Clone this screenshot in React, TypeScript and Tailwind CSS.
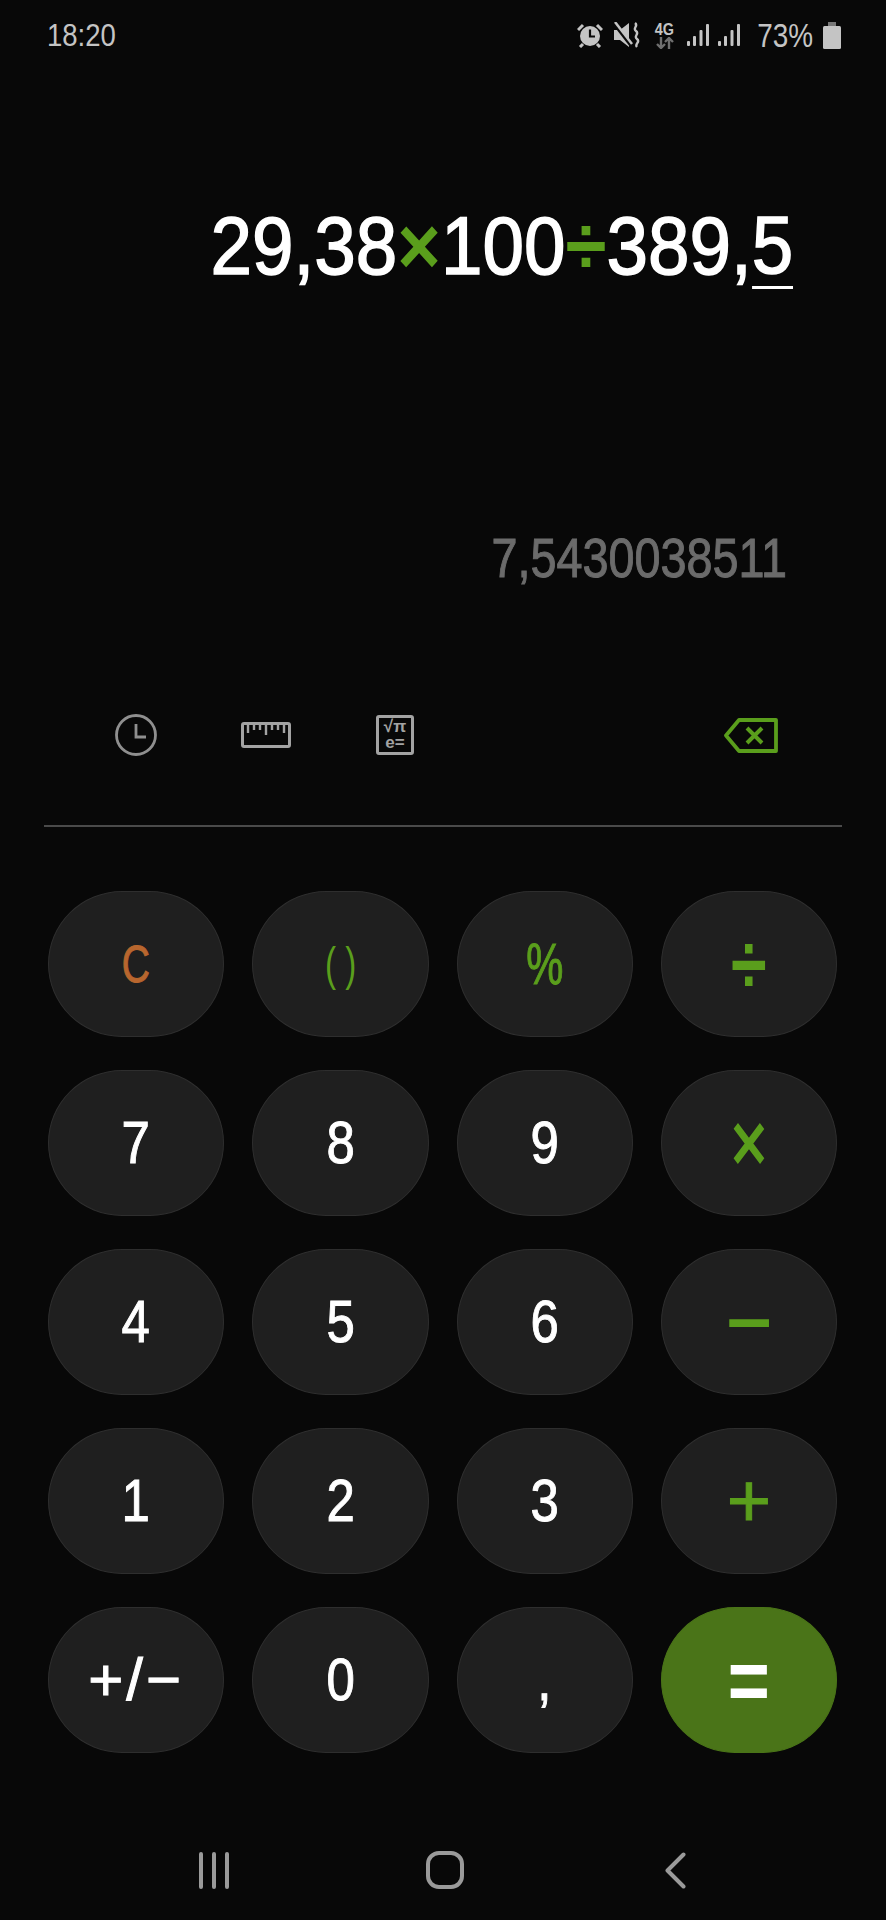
const sans = "font-['Liberation_Sans',sans-serif]";

const keys = [
  { label: "C", tone: "text-[#b8662e] text-[52px] scale-x-[.75] [-webkit-text-stroke:1px_#b8662e]" },
  { label: "( )", tone: "text-[#5a9e1c] text-[46px] scale-x-[.72]" },
  { label: "%", tone: "text-[#5a9e1c] text-[58px] scale-x-[.72] [-webkit-text-stroke:1px_#5a9e1c]" },
  { label: "÷", tone: "text-[#5a9e1c] text-[72px] font-bold scale-x-[.9] scale-y-[1.15]" },
  { label: "7" },
  { label: "8" },
  { label: "9" },
  { label: "×", tone: "text-[#5a9e1c] text-[82px] scale-x-[.78] scale-y-[1.05] [-webkit-text-stroke:2px_#5a9e1c]" },
  { label: "4" },
  { label: "5" },
  { label: "6" },
  { label: "−", tone: "text-[#5a9e1c] text-[72px] font-bold scale-x-[1.1]" },
  { label: "1" },
  { label: "2" },
  { label: "3" },
  { label: "+", tone: "text-[#5a9e1c] text-[76px] [-webkit-text-stroke:1px_#5a9e1c]" },
  { label: "+/−", tone: "text-white text-[60px] tracking-[3px] [-webkit-text-stroke:1px_white]" },
  { label: "0" },
  { label: "," },
  { label: "=", tone: "text-white text-[72px] font-bold scale-y-[1.2]", accent: true },
];

function Signal() {
  return (
    <svg width="22" height="22" viewBox="0 0 22 22" fill="#c4c4c4">
      <rect x="0" y="17" width="3" height="5" rx="1" />
      <rect x="6" y="12" width="3" height="10" rx="1" />
      <rect x="12.5" y="6" width="3" height="16" rx="1" />
      <rect x="19" y="0" width="3" height="22" rx="1" />
    </svg>
  );
}

function StatusBar() {
  return (
    <div className={`flex h-[70px] items-center pl-[47px] pr-[45px] text-[#c4c4c4] ${sans}`}>
      <span className="inline-block origin-left scale-x-[.86] text-[32px] leading-none">18:20</span>
      <div className="ml-auto flex items-center">
        <svg width="26" height="25" viewBox="0 0 26 25">
          <circle cx="13" cy="13" r="10" fill="#c4c4c4" />
          <path d="M13 6.5v7h5" fill="none" stroke="#0a0a0a" strokeWidth="2.2" />
          <path d="M1 7l5-5M25 7l-5-5M6 21l-3 3M20 21l3 3" stroke="#c4c4c4" strokeWidth="3" />
        </svg>
        <svg className="ml-[10px]" width="27" height="26" viewBox="0 0 27 26">
          <path d="M1 8h6l9-7v24l-9-7H1z" fill="#c4c4c4" />
          <path d="M2 3l17 22" stroke="#0a0a0a" strokeWidth="3" />
          <path d="M2 0l17 22" stroke="#c4c4c4" strokeWidth="2.5" />
          <path d="M22 1c4 3-3 5 1 8s-3 5 1 8-3 5 0 8" fill="none" stroke="#c4c4c4" strokeWidth="2.4" />
        </svg>
        <div className="ml-[14px] flex w-[21px] flex-col items-center">
          <span className="text-[17px] font-bold leading-[15px] scale-x-[.85]">4G</span>
          <svg width="20" height="12" viewBox="0 0 20 12" fill="none" stroke="#6f6f6f" strokeWidth="2.4">
            <path d="M6 0v11M2 7l4 4 4-4M14 12V1M10 5l4-4 4 4" />
          </svg>
        </div>
        <div className="ml-[12px] flex gap-[9px]">
          <Signal />
          <Signal />
        </div>
        <div className="ml-[18px] flex w-[55px] justify-end">
          <span className="inline-block origin-right scale-x-[.82] text-[34px] leading-none">73%</span>
        </div>
        <svg className="ml-[10px]" width="18" height="27" viewBox="0 0 18 27" fill="#c4c4c4">
          <rect x="5" y="0" width="8" height="5" fill="#777" />
          <rect x="0" y="4" width="18" height="23" rx="1.5" />
        </svg>
      </div>
    </div>
  );
}

function Tools() {
  return (
    <div className="mt-[109px] flex h-[56px] items-center pl-[115px] pr-[108px]">
      <svg width="42" height="42" viewBox="0 0 42 42" fill="none" stroke="#8f8f8f" strokeWidth="2.8">
        <circle cx="21" cy="21" r="19.5" />
        <path d="M21 10v13h10" />
      </svg>
      <svg className="ml-[84px]" width="50" height="26" viewBox="0 0 50 26" fill="none" stroke="#a3a3a3" strokeWidth="3">
        <rect x="1.5" y="1.5" width="47" height="23" rx="1.5" />
        <path d="M7 2v9M13 2v6M19 2v6M25 2v11M31 2v6M37 2v6M43 2v9" strokeWidth="2.4" />
      </svg>
      <div className={`ml-[85px] flex h-[40px] w-[38px] flex-col items-center justify-center rounded-[3px] border-[3px] border-[#a3a3a3] text-[17px] font-bold leading-[16px] text-[#a3a3a3] ${sans}`}>
        <span>√π</span>
        <span>e=</span>
      </div>
      <svg className="ml-auto" width="54" height="35" viewBox="0 0 54 35" fill="none" stroke="#5a9e1c" strokeWidth="3.8">
        <path d="M52 2H15L2 17.5 15 33h37z" strokeLinejoin="round" />
        <path d="M23 10l15 15M38 10L23 25" strokeWidth="4" />
      </svg>
    </div>
  );
}

function Keypad() {
  return (
    <div className="mt-[64px] grid grid-cols-4 gap-x-[28px] gap-y-[33px] pl-[48px] pr-[49px]">
      {keys.map((key) => (
        <button
          key={key.label}
          className={`flex h-[146px] items-center justify-center rounded-[74px/73px] border leading-none ${sans} ${
            key.accent ? "border-[#4a7418] bg-[#4a7418]" : "border-[#2e2e2e] bg-[#1f1f1f]"
          }`}
        >
          <span className={`inline-block ${key.tone ?? "scale-x-[.85] text-[60px] text-white [-webkit-text-stroke:1px_white]"}`}>{key.label}</span>
        </button>
      ))}
    </div>
  );
}

function NavBar() {
  return (
    <div className="mt-[98px] flex items-center pl-[198px]">
      <svg width="32" height="37" viewBox="0 0 32 37" stroke="#9a9a9a" strokeWidth="4" strokeLinecap="round">
        <path d="M3 2v33M16 2v33M29 2v33" />
      </svg>
      <svg className="ml-[196px]" width="38" height="38" viewBox="0 0 38 38" fill="none" stroke="#9a9a9a" strokeWidth="4">
        <rect x="2" y="2" width="34" height="34" rx="11" />
      </svg>
      <svg className="ml-[201px]" width="21" height="37" viewBox="0 0 21 37" fill="none" stroke="#9a9a9a" strokeWidth="4" strokeLinecap="round" strokeLinejoin="round">
        <path d="M18.5 2.5l-16 16 16 16" />
      </svg>
    </div>
  );
}

export default function App() {
  return (
    <div className="h-[1920px] w-[886px] overflow-hidden bg-[#080808]">
      <StatusBar />
      <div className={`mt-[126px] flex h-[100px] items-center justify-end pr-[93px] text-[82px] leading-none text-white ${sans}`}>
        <div className="flex origin-right scale-x-[.91] items-center [-webkit-text-stroke:1.5px_white]">
          <span>29,38</span>
          <span className="font-bold text-[#5a9e1c] [-webkit-text-stroke:0]">×</span>
          <span>100</span>
          <span className="font-bold text-[#5a9e1c] [-webkit-text-stroke:0]">÷</span>
          <span>389,</span>
          <span className="border-b-[3px] border-white leading-[82px]">5</span>
        </div>
      </div>
      <div className={`mt-[222px] flex h-[80px] items-center justify-end pr-[99px] text-[56px] leading-none text-[#6b6b6b] ${sans}`}>
        <span className="inline-block origin-right scale-x-[.835] [-webkit-text-stroke:1px_#6b6b6b]">7,5430038511</span>
      </div>
      <Tools />
      <div className="mx-[44px] mt-[62px] h-[2px] bg-[#4a4a4a]" />
      <Keypad />
      <NavBar />
    </div>
  );
}
